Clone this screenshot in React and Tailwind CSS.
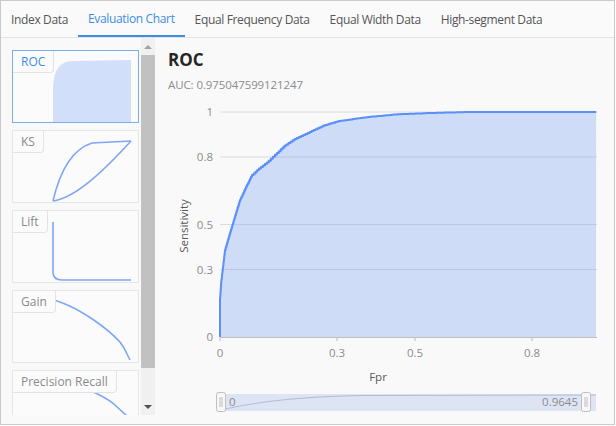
import React from "react";

const tabs = [
  "Index Data",
  "Evaluation Chart",
  "Equal Frequency Data",
  "Equal Width Data",
  "High-segment Data",
];

// key points of the roc curve (fpr, tpr)
const rocKeys = [
  [0, 0],
  [0, 0.16],
  [0.003, 0.236],
  [0.013, 0.38],
  [0.03, 0.48],
  [0.051, 0.6],
  [0.067, 0.66],
  [0.082, 0.712],
  [0.1, 0.742],
  [0.125, 0.775],
  [0.146, 0.81],
  [0.17, 0.85],
  [0.197, 0.88],
  [0.23, 0.907],
  [0.27, 0.94],
  [0.31, 0.96],
  [0.385, 0.978],
  [0.46, 0.99],
  [0.55, 0.996],
  [0.64, 1],
  [0.9645, 1],
];

const px = (f) => 220 + 390 * f;
const py = (t) => 336 - 225 * t;

// step the curve a little so it looks like real roc data
function rocPoints() {
  const pts = [[px(0), py(0)]];
  for (let i = 1; i < rocKeys.length; i++) {
    const [f0, t0] = rocKeys[i - 1];
    const [f1, t1] = rocKeys[i];
    const dx = px(f1) - px(f0);
    const dy = py(t0) - py(t1);
    const n = Math.max(1, Math.round(Math.max(dx, dy) / 2));
    for (let k = 1; k <= n; k++) {
      const a = k / n;
      const x = px(f0) + dx * a;
      const y = py(t0) - dy * a;
      const prev = pts[pts.length - 1];
      pts.push([prev[0], y]);
      pts.push([x, y]);
    }
  }
  return pts;
}

const pts = rocPoints();
const linePath = pts.map((p, i) => `${i ? "L" : "M"}${p[0].toFixed(1)},${p[1].toFixed(1)}`).join(" ");
const areaPath = `${linePath} L596,336 Z`;

const thumbs = [
  { label: "ROC", active: true },
  { label: "KS" },
  { label: "Lift" },
  { label: "Gain" },
  { label: "Precision Recall" },
];

function Thumb({ label }) {
  const stroke = "#7ea6f5";
  return (
    <svg width="125" height="71" viewBox="1 1 125 71" className="block">
      {label === "ROC" && (
        <path d="M41,72 L41,42 C41,20 47,12 60,11 L119,10 L119,72 Z" fill="#d2dffa" />
      )}
      {label === "KS" && (
        <g fill="none" stroke={stroke} strokeWidth="1.6">
          <path d="M41,71 C47,45 58,20 80,13 L119,11" />
          <path d="M41,71 C62,68 88,45 119,11" />
        </g>
      )}
      {label === "Lift" && (
        <path d="M41,12 L41,62 Q41,70 50,70 L119,70" fill="none" stroke={stroke} strokeWidth="1.6" />
      )}
      {label === "Gain" && (
        <path d="M42,10 L48,12 C70,20 95,38 108,52 L112,58 L118,70" fill="none" stroke={stroke} strokeWidth="1.6" />
      )}
      {label === "Precision Recall" && (
        <path d="M60,14 C78,20 96,28 104,36 L115,46" fill="none" stroke={stroke} strokeWidth="1.6" />
      )}
    </svg>
  );
}

function ChartArea() {
  const grid = [
    [1, "1"],
    [0.8, "0.8"],
    [0.5, "0.5"],
    [0.3, "0.3"],
  ];
  const xt = [
    [0, "0"],
    [0.3, "0.3"],
    [0.5, "0.5"],
    [0.8, "0.8"],
  ];
  return (
    <svg width="450" height="320" viewBox="160 98 450 320" className="block" style={{ fontFamily: "'Open Sans', sans-serif" }}>
      {grid.map(([t, l]) => (
        <g key={l}>
          <line x1="220" x2="597" y1={py(t)} y2={py(t)} stroke="#dcdcdc" />
          <text x="213" y={py(t) + 4} textAnchor="end" fontSize="11.5" fill="#8c8c8c">{l}</text>
        </g>
      ))}
      <text x="213" y="340" textAnchor="end" fontSize="11.5" fill="#8c8c8c">0</text>
      <path d={areaPath} fill="#5b8ff9" fillOpacity="0.27" />
      <path d={linePath} fill="none" stroke="#5b8ff9" strokeWidth="2" strokeLinejoin="round" />
      <line x1="220" x2="597" y1="336.5" y2="336.5" stroke="#bfbfbf" />
      {xt.map(([f, l]) => (
        <g key={l}>
          <line x1={px(f)} x2={px(f)} y1="337" y2="340" stroke="#bfbfbf" />
          <text x={px(f)} y="356" textAnchor="middle" fontSize="11.5" fill="#8c8c8c">{l}</text>
        </g>
      ))}
      <text x="378" y="380" textAnchor="middle" fontSize="11.5" fill="#595959">Fpr</text>
      <text transform="translate(188 225) rotate(-90)" textAnchor="middle" fontSize="11.5" fill="#595959">Sensitivity</text>

      {/* slider */}
      <rect x="220" y="393" width="376" height="17" fill="#dde4f4" />
      <path d="M221,409 C260,400 300,396 360,394.5 L596,394" fill="none" stroke="#b2bdd3" strokeWidth="1" />
      <text x="229" y="405" fontSize="11.5" fill="#8c8c8c">0</text>
      <text x="578" y="405" textAnchor="end" fontSize="11.5" fill="#8c8c8c">0.9645</text>
      {[216.5, 581.5].map((x) => (
        <g key={x}>
          <rect x={x} y="391.5" width="9" height="19" rx="2" fill="#f7f7f7" stroke="#bfbfbf" />
          <line x1={x + 3.5} x2={x + 3.5} y1="396" y2="406" stroke="#bfbfbf" />
          <line x1={x + 5.5} x2={x + 5.5} y1="396" y2="406" stroke="#bfbfbf" />
        </g>
      ))}
    </svg>
  );
}

export default function App() {
  return (
    <div className="w-[615px] h-[425px] border border-[#c9c9c9] bg-[#f9f9f9] flex flex-col overflow-hidden font-['Open_Sans',sans-serif]">
      {/* Tabs */}
      <div className="h-[37px] flex border-b border-[#e3e3e3] bg-[#fafafa] shrink-0">
        {tabs.map((t) => (
          <div
            key={t}
            className={
              t === "Evaluation Chart"
                ? "px-[10px] flex items-center text-[12px] tracking-[-0.35px] text-[#3a8ee6] border-b-2 border-[#3a8ee6] pt-[2px]"
                : "px-[10px] flex items-center text-[12px] tracking-[-0.35px] text-[#555] pt-[2px]"
            }
          >
            {t}
          </div>
        ))}
      </div>

      <div className="flex flex-1 min-h-0">
        {/* Left thumbnails */}
        <div className="w-[154px] h-[377px] flex shrink-0">
          <div className="flex-1 overflow-hidden pl-[11px] pt-[12px] pr-[1px] flex flex-col gap-[7px]">
            {thumbs.map((th) => (
              <div
                key={th.label}
                className={
                  th.active
                    ? "relative w-[127px] h-[73px] shrink-0 border-[1.5px] border-[#7aaee9] bg-[#fbfbfb]"
                    : "relative w-[127px] h-[73px] shrink-0 border border-[#e6e6e6] bg-[#fbfbfb]"
                }
              >
                <Thumb label={th.label} />
                <div
                  className={
                    th.active
                      ? "absolute left-0 top-0 h-[22px] px-[8px] flex items-center text-[12px] text-[#3a8ee6] bg-[#fbfbfb] border-r border-b border-[#e3e3e3] rounded-br-[4px]"
                      : "absolute left-0 top-0 h-[22px] px-[8px] flex items-center text-[12px] text-[#8a8a8a] bg-[#fbfbfb] border-r border-b border-[#e3e3e3] rounded-br-[4px]"
                  }
                >
                  {th.label}
                </div>
              </div>
            ))}
          </div>
          {/* scrollbar */}
          <div className="w-[14px] bg-[#f0f0f0] flex flex-col items-center">
            <div className="h-[17px] flex items-center justify-center">
              <div className="w-0 h-0 border-l-[4px] border-r-[4px] border-b-[4px] border-l-transparent border-r-transparent border-b-[#a3a3a3]" />
            </div>
            <div className="w-[14px] h-[313px] bg-[#c1c1c1]" />
            <div className="flex-1" />
            <div className="h-[17px] flex items-center justify-center">
              <div className="w-0 h-0 border-l-[4px] border-r-[4px] border-t-[4px] border-l-transparent border-r-transparent border-t-[#505050]" />
            </div>
          </div>
        </div>

        {/* Main chart */}
        <div className="flex-1 flex flex-col pl-[13px] pt-[10px]">
          <div className="text-[17px] font-bold text-[#262626] leading-[24px]">ROC</div>
          <div className="text-[11.5px] tracking-[-0.1px] text-[#8c8c8c] mt-[5px] leading-[16px]">AUC: 0.975047599121247</div>
          <div className="-ml-[8px] mt-[6px]">
            <ChartArea />
          </div>
        </div>
      </div>
    </div>
  );
}
